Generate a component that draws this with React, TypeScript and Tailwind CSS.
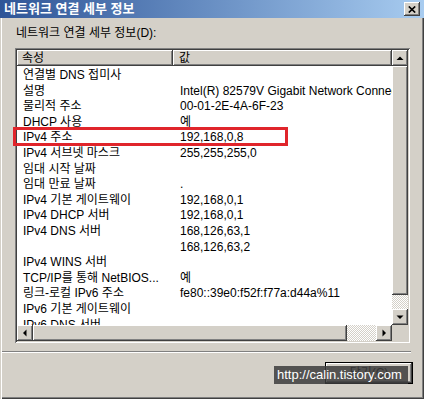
import React from "react";

const rows: [string, string][] = [
  ["연결별 DNS 접미사", ""],
  ["설명", "Intel(R) 82579V Gigabit Network Connection"],
  ["물리적 주소", "00-01-2E-4A-6F-23"],
  ["DHCP 사용", "예"],
  ["IPv4 주소", "192,168,0,8"],
  ["IPv4 서브넷 마스크", "255,255,255,0"],
  ["임대 시작 날짜", ""],
  ["임대 만료 날짜", "."],
  ["IPv4 기본 게이트웨이", "192,168,0,1"],
  ["IPv4 DHCP 서버", "192,168,0,1"],
  ["IPv4 DNS 서버", "168,126,63,1"],
  ["", "168,126,63,2"],
  ["IPv4 WINS 서버", ""],
  ["TCP/IP를 통해 NetBIOS...", "예"],
  ["링크-로컬 IPv6 주소", "fe80::39e0:f52f:f77a:d44a%11"],
  ["IPv6 기본 게이트웨이", ""],
  ["IPv6 DNS 서버", ""],
];

const raised =
  "bg-[#d4d0c8] shadow-[inset_-1px_-1px_#404040,inset_1px_1px_#ffffff,inset_-2px_-2px_#808080,inset_2px_2px_#d4d0c8]";
const hatch =
  "bg-[image:repeating-conic-gradient(#d4d0c8_0%_25%,#ffffff_0%_50%)] bg-[length:2px_2px]";

const arrows = {
  up: "0.5,6 7.5,6 4,2.5",
  down: "0.5,2.5 7.5,2.5 4,6",
  left: "5.5,0.5 5.5,7.5 2,4",
  right: "2.5,0.5 2.5,7.5 6,4",
};

function ArrowBtn({ dir }: { dir: keyof typeof arrows }) {
  return (
    <div className={`w-[16px] h-[16px] shrink-0 flex items-center justify-center ${raised}`}>
      <svg width="8" height="8" viewBox="0 0 8 8">
        <polygon points={arrows[dir]} fill="#000" />
      </svg>
    </div>
  );
}

export default function App() {
  return (
    <div className="relative w-[424px] h-[399px] overflow-hidden flex flex-col bg-[#d4d0c8] text-black text-[12px] font-['Liberation_Sans','Noto_Sans_CJK_KR',sans-serif] shadow-[inset_1px_1px_#d4d0c8,inset_2px_2px_#ffffff,inset_-1px_-1px_#404040,inset_-2px_-2px_#808080]">
      {/* title bar */}
      <div className="h-[18px] shrink-0 flex items-center justify-between pl-[4px] pr-[4px] bg-gradient-to-r from-[#2f5597] to-[#a8ccf0]">
        <span className="text-white font-bold text-[13px] leading-[18px]">네트워크 연결 세부 정보</span>
        <div className={`w-[16px] h-[14px] flex items-center justify-center ${raised}`}>
          <svg width="8" height="7" viewBox="0 0 8 7">
            <path d="M0.8 0.5 L7.2 6.5 M7.2 0.5 L0.8 6.5" stroke="#000" strokeWidth="1.7" />
          </svg>
        </div>
      </div>

      <div className="mt-[8px] ml-[16px] leading-[15px]">네트워크 연결 세부 정보(D):</div>

      {/* list box */}
      <div className="mt-[7px] ml-[15px] w-[395px] h-[295px] p-[2px] bg-white flex flex-col shadow-[inset_1px_1px_#808080,inset_-1px_-1px_#ffffff,inset_2px_2px_#404040,inset_-2px_-2px_#d4d0c8]">
        <div className="flex h-[275px]">
          <div className="flex-1 overflow-hidden">
            <div className="flex h-[16px] leading-[16px]">
              <div className={`w-[156px] shrink-0 pl-[5px] ${raised}`}>속성</div>
              <div className={`flex-1 pl-[6px] ${raised}`}>값</div>
            </div>
            {rows.map(([k, v], i) => (
              <div key={i} className="flex h-[15.6px] pt-[2px] leading-[15.6px] whitespace-nowrap">
                <div className="w-[156px] shrink-0 pl-[6px]">{k}</div>
                <div className="pl-[7px]">{v}</div>
              </div>
            ))}
          </div>
          <div className="w-[16px] flex flex-col">
            <ArrowBtn dir="up" />
            <div className={`flex-1 ${raised}`} />
            <div className={`h-[14px] ${hatch}`} />
            <ArrowBtn dir="down" />
          </div>
        </div>
        <div className="flex h-[16px]">
          <ArrowBtn dir="left" />
          <div className={`w-[314px] ${raised}`} />
          <div className={`flex-1 ${hatch}`} />
          <ArrowBtn dir="right" />
          <div className="w-[16px] bg-[#d4d0c8]" />
        </div>
      </div>

      <div className="mt-[8px] ml-[2px] w-[409px] h-[2px] border-t border-b border-t-[#808080] border-b-white" />

      <div className="mt-[9px] ml-[325px] w-[88px] h-[22px] border border-black">
        <div className={`w-full h-full flex items-center justify-center ${raised}`}>닫기(C)</div>
      </div>

      {/* highlight */}
      <div className="absolute left-[13px] top-[127px] w-[275px] h-[19px] border-[3px] border-[#e0252b]" />

      {/* watermark */}
      <div className="absolute left-[274px] top-[366px] w-[134px] h-[18px] pl-[3px] bg-[#3c3c3c]/85 text-white text-[13px] leading-[18px] font-['Liberation_Sans',sans-serif]">
        http://calin.tistory.com
      </div>
    </div>
  );
}
